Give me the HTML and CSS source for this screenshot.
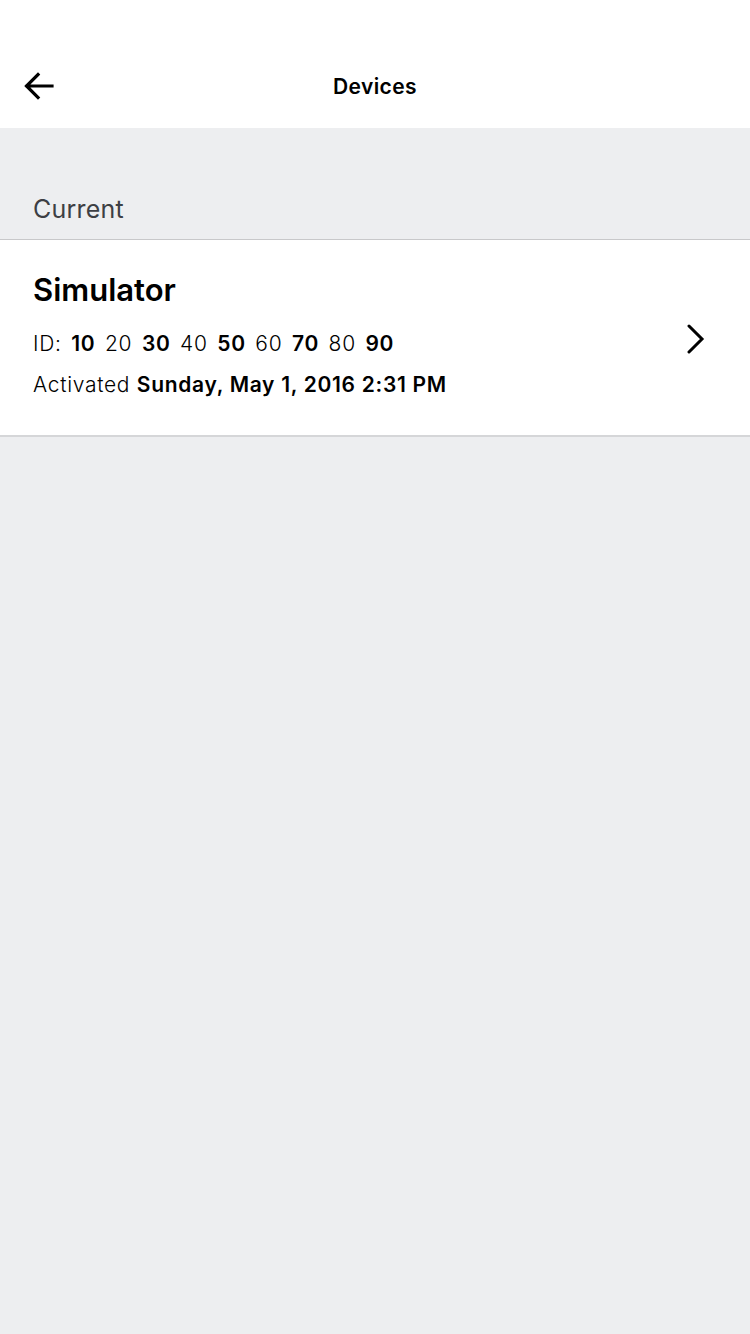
FILE: index.html
```html
<!DOCTYPE html>
<html>
<head>
<meta charset="utf-8">
<link rel="stylesheet" href="styles.css">
</head>
<body>
<div class="page">
  <header class="topbar">
    <button class="back" aria-label="Back">
      <svg width="30" height="28" viewBox="0 0 30 28"><path d="M28 14H3M14 2.5L2.5 14L14 25.5" fill="none" stroke="#000" stroke-width="3.2" stroke-linecap="square" stroke-linejoin="miter"/></svg>
    </button>
    <h1 class="title">Devices</h1>
    <div class="spacer"></div>
  </header>
  <div class="section-label">Current</div>
  <div class="card">
    <div class="card-body">
      <div class="device-name">Simulator</div>
      <div class="device-id">ID: <b>10</b> 20 <b>30</b> 40 <b>50</b> 60 <b>70</b> 80 <b>90</b></div>
      <div class="device-date">Activated <b>Sunday, May 1, 2016 2:31 PM</b></div>
    </div>
    <svg class="chevron" width="20" height="30" viewBox="0 0 20 30"><path d="M3 2L16 15L3 28" fill="none" stroke="#000" stroke-width="3" stroke-linecap="round" stroke-linejoin="miter"/></svg>
  </div>
</div>
</body>
</html>
```
FILE: styles.css
```css
* { box-sizing: border-box; }
html, body { margin: 0; padding: 0; }
body {
  background: #edeef0;
  font-family: "Inter", "Roboto", "Liberation Sans", sans-serif;
  color: #000;
  width: 750px;
  min-height: 1334px;
}
.topbar {
  height: 128px;
  background: #fff;
  display: flex;
  align-items: center;
  padding: 44px 24px 0 24px;
}
.back {
  border: 0;
  background: none;
  padding: 0;
  width: 40px;
  height: 40px;
  display: flex;
  align-items: center;
  justify-content: flex-start;
}
.title {
  flex: 1;
  text-align: center;
  margin: 0;
  font-size: 21px;
  font-weight: 600;
  letter-spacing: 0.4px;
}
.spacer { width: 40px; }
.section-label {
  height: 112px;
  padding: 66px 0 0 33px;
  font-size: 25px;
  color: #3d3f44;
  letter-spacing: 0.2px;
  border-bottom: 1px solid #c8c8ca;
}
.card {
  background: #fff;
  height: 197px;
  border-bottom: 2px solid #d5d6d8;
  display: flex;
  align-items: flex-start;
  padding: 31px 44px 0 33px;
}
.card-body { flex: 1; }
.device-name {
  font-size: 31px;
  font-weight: 600;
  line-height: 38px;
}
.device-id, .device-date {
  font-size: 21px;
  font-weight: 300;
  line-height: 24px;
  letter-spacing: 0.7px;
}
.device-id { margin-top: 23px; word-spacing: 3px; }
.device-date { margin-top: 17px; }
.device-id b, .device-date b { font-weight: 600; }
.chevron { flex: none; margin-top: 53px; }
```
